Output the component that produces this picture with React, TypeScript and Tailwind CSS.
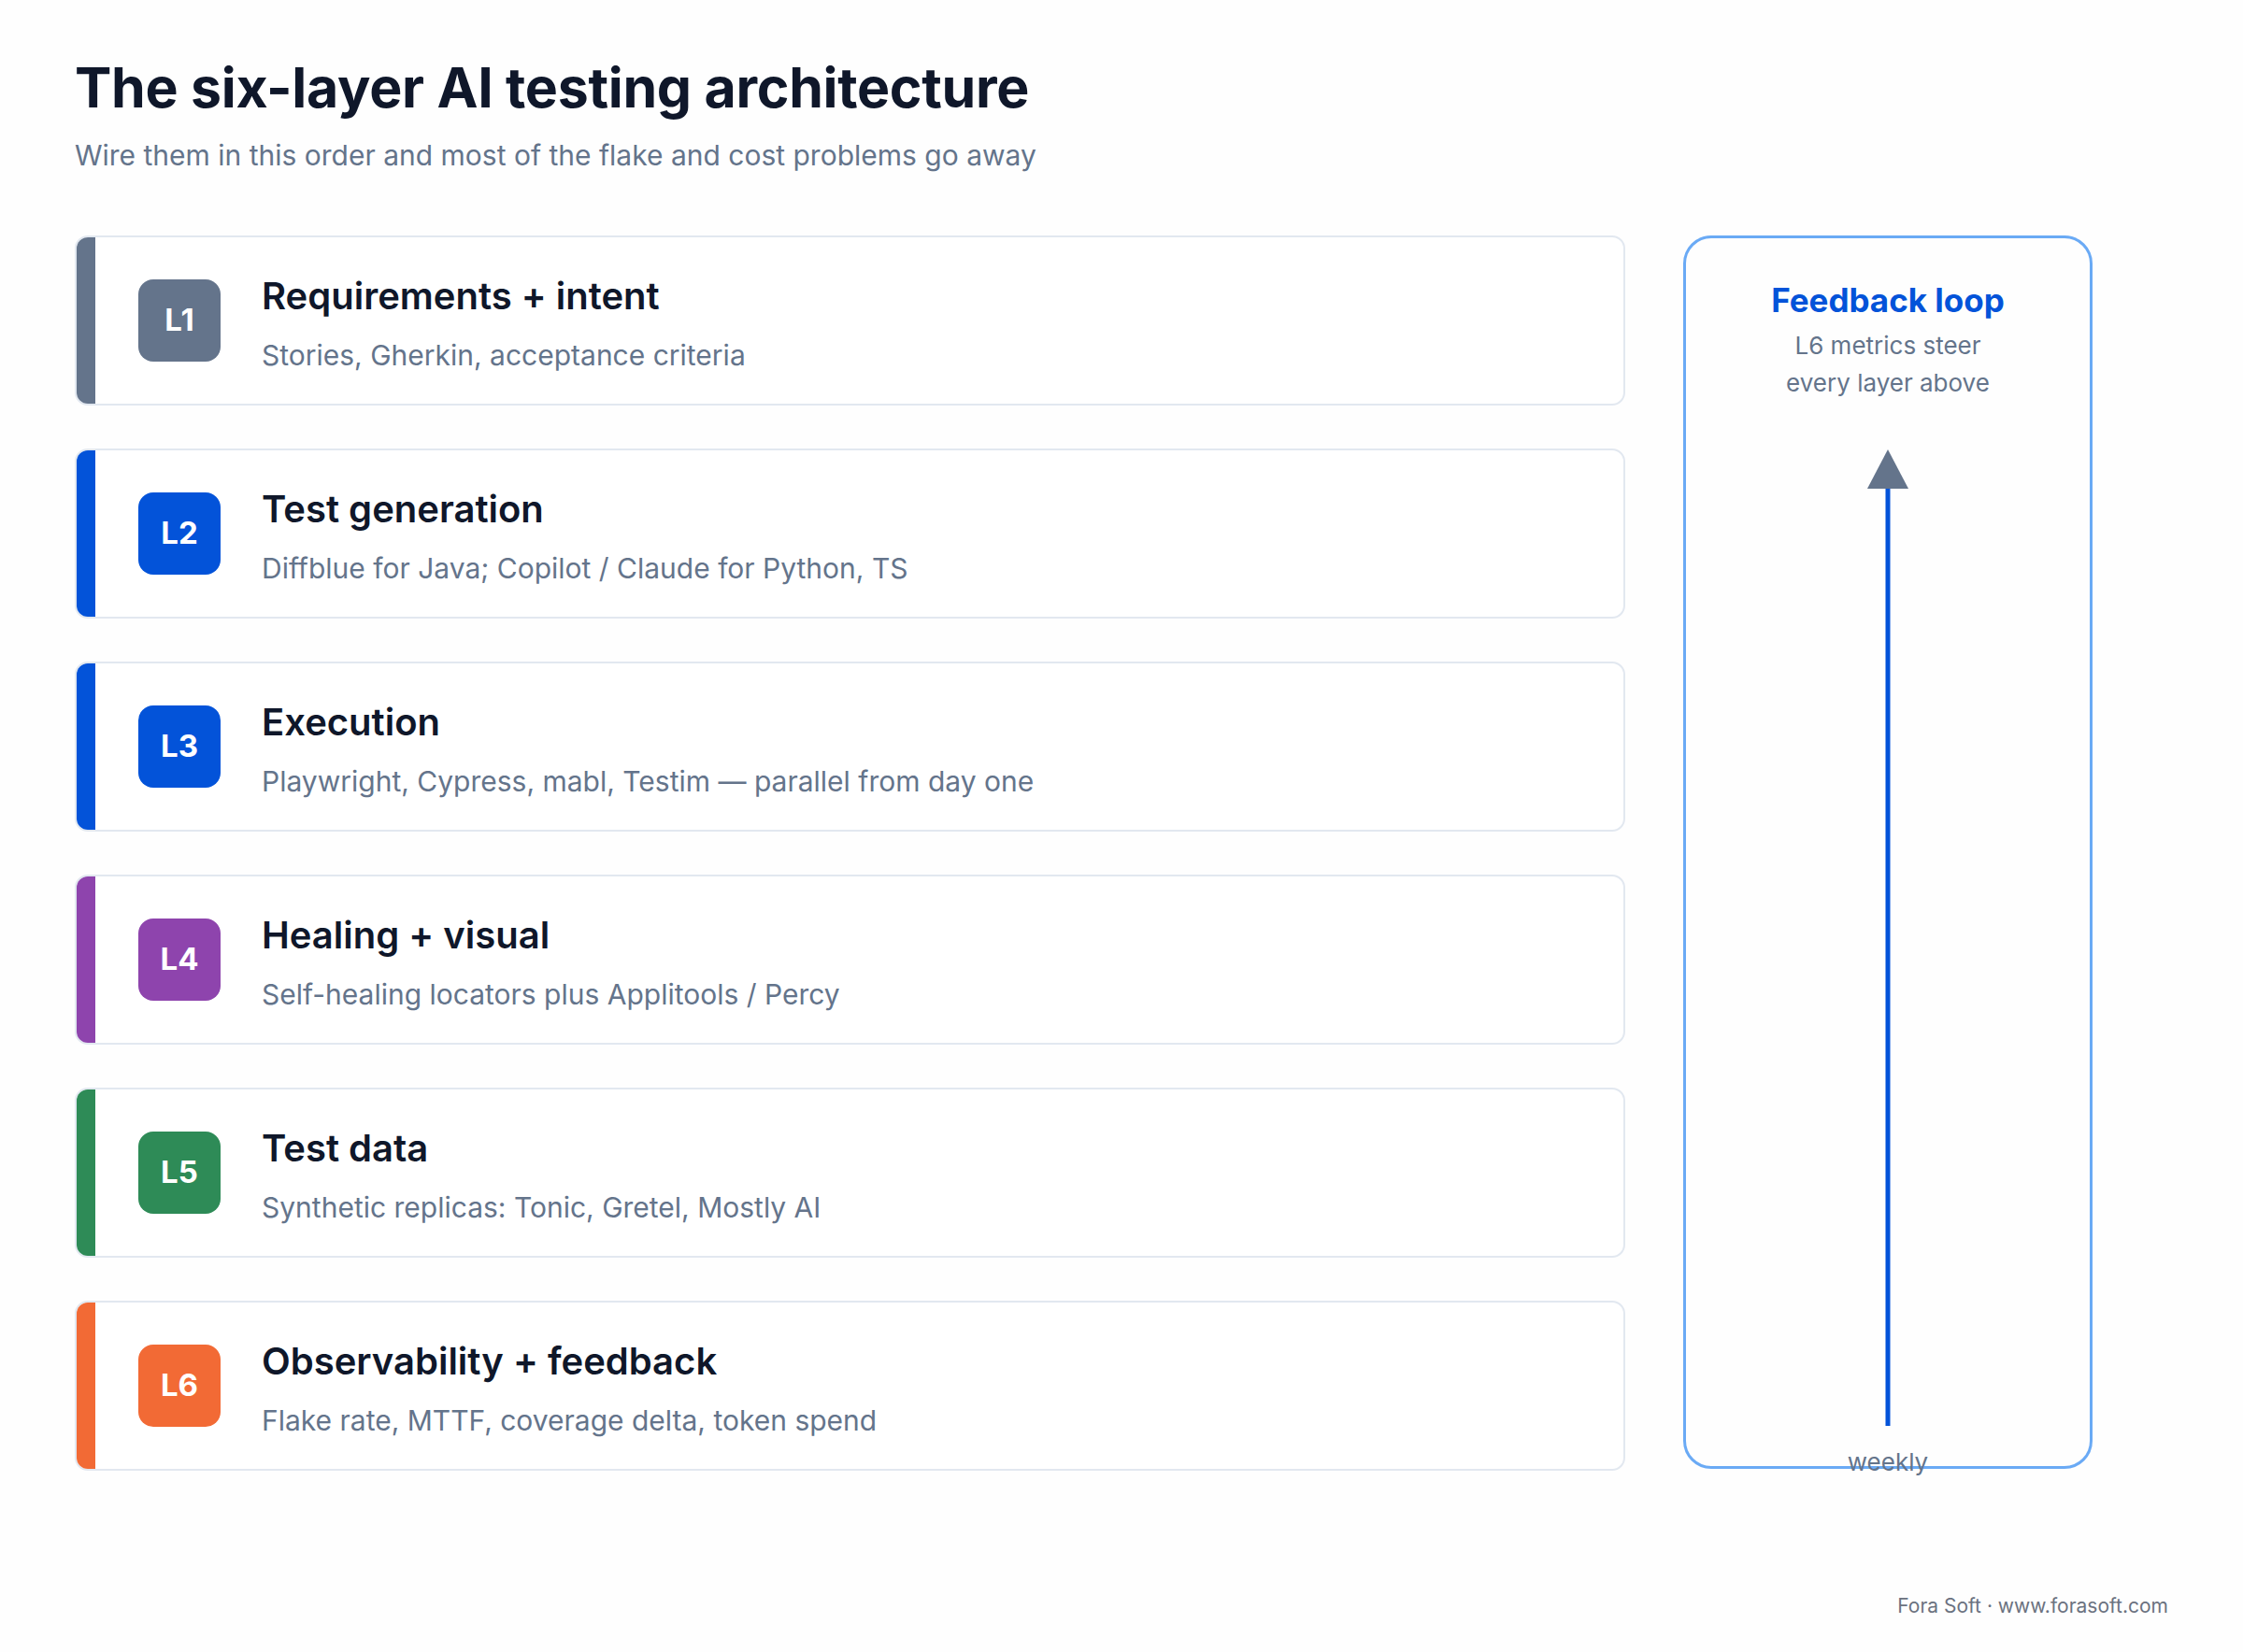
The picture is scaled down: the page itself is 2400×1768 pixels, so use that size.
const layers = [
  { id: "L1", title: "Requirements + intent", sub: "Stories, Gherkin, acceptance criteria", bar: "bg-[#64748b]" },
  { id: "L2", title: "Test generation", sub: "Diffblue for Java; Copilot / Claude for Python, TS", bar: "bg-[#0353d9]" },
  { id: "L3", title: "Execution", sub: "Playwright, Cypress, mabl, Testim — parallel from day one", bar: "bg-[#0353d9]" },
  { id: "L4", title: "Healing + visual", sub: "Self-healing locators plus Applitools / Percy", bar: "bg-[#8e44ad]" },
  { id: "L5", title: "Test data", sub: "Synthetic replicas: Tonic, Gretel, Mostly AI", bar: "bg-[#2e8b57]" },
  { id: "L6", title: "Observability + feedback", sub: "Flake rate, MTTF, coverage delta, token spend", bar: "bg-[#f26a35]" },
];

export default function App() {
  return (
    <div className="w-[2400px] h-[1768px] bg-[#fefefe] relative font-[Inter] pl-[80px] pt-[58px]">
      <h1 className="text-[59px] leading-[72px] font-bold text-[#0f172a] tracking-[-0.3px]">The six-layer AI testing architecture</h1>
      <p className="mt-[16px] text-[30px] leading-[40px] text-[#64748b]">Wire them in this order and most of the flake and cost problems go away</p>
      <div className="mt-[66px] flex gap-[62px]">
        <div className="w-[1659px] flex flex-col gap-[46px]">
          {layers.map((l) => (
            <div key={l.id} className="h-[182px] flex rounded-[14px] overflow-hidden border-2 border-[#e2e8f0] bg-white">
              <div className={`w-[22px] -my-[2px] -ml-[2px] ${l.bar}`} />
              <div className="flex items-center pl-[46px]">
                <div className={`w-[88px] h-[88px] rounded-[16px] ${l.bar} flex items-center justify-center text-white text-[33px] font-bold`}>{l.id}</div>
                <div className="ml-[44px] pt-[6px]">
                  <div className="text-[40px] leading-[50px] font-semibold text-[#0f172a]">{l.title}</div>
                  <div className="mt-[18px] text-[30px] leading-[40px] text-[#64748b]">{l.sub}</div>
                </div>
              </div>
            </div>
          ))}
        </div>
        <div className="w-[438px] h-[1320px] border-[3px] border-[#6aaaf5] rounded-[30px] flex flex-col items-center relative">
          <div className="mt-[41px] text-[35px] leading-[50px] font-bold text-[#0353d9]">Feedback loop</div>
          <div className="mt-[4px] text-[26px] leading-[40px] text-[#64748b] text-center">L6 metrics steer<br />every layer above</div>
          <svg className="mt-[51px]" width="48" height="1045" viewBox="0 0 48 1045">
            <rect x="21.5" y="40" width="5" height="1005" fill="#0353d9" />
            <polygon points="24,0 46,42 2,42" fill="#64748b" />
          </svg>
          <div className="absolute bottom-[-14px] text-[26px] leading-[36px] text-[#64748b]">weekly</div>
        </div>
      </div>
      <div className="absolute right-[80px] top-[1704px] text-[21px] leading-[30px] text-[#6b7280]">Fora Soft · www.forasoft.com</div>
    </div>
  );
}
